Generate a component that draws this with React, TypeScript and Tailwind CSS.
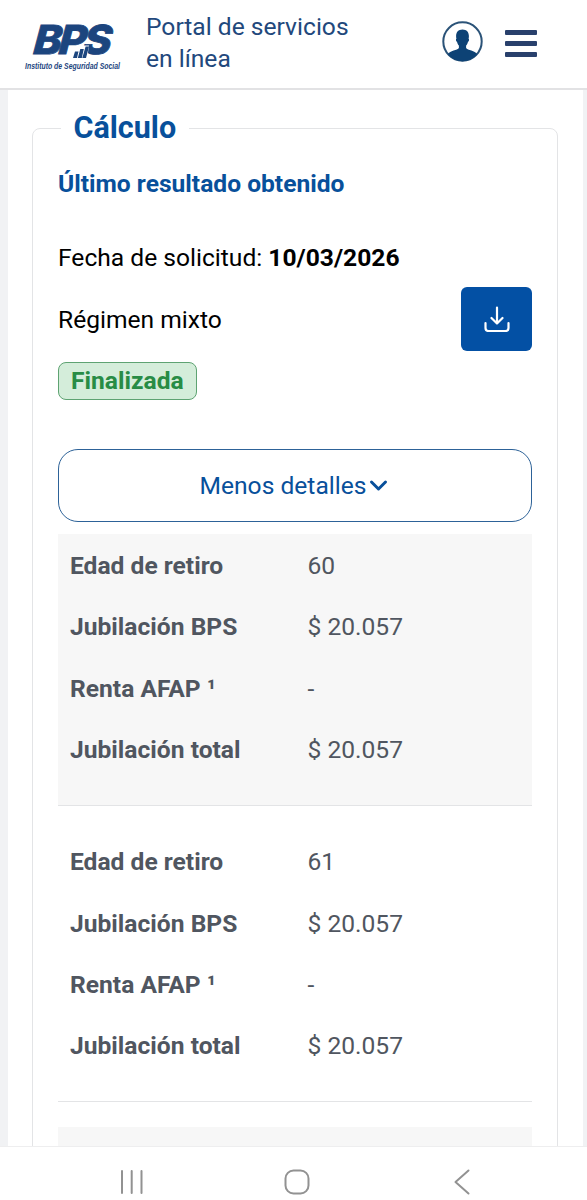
import React from "react"

const results = [
  { age: "60", bps: "$ 20.057", afap: "-", total: "$ 20.057" },
  { age: "61", bps: "$ 20.057", afap: "-", total: "$ 20.057" },
]

function BpsLogo() {
  return (
    <svg width="98" height="54" viewBox="0 0 98 54" className="shrink-0 overflow-visible" fill="#1c457e" aria-label="BPS">
      <text
        x="11.500"
        y="31.500"
        transform="skewX(-5)"
        textLength="75"
        lengthAdjust="spacingAndGlyphs"
        className="font-['Inter',sans-serif] text-[40px] font-extrabold italic tracking-[-3px]"
        stroke="#1c457e"
        strokeWidth="0.800"
      >
        BPS
      </text>
      {/* barras ascendentes bajo la P */}
      <path d="M49 26.500L58 23.500H65L63 37H47Z" fill="#fff" />
      <path d="M51 29.500h3.500l-1.500 6.500h-4zM56.300 27h3.500l-2 9h-4zM61.600 24.500h3.400l-3 11.500h-3.700z" />
      <text
        x="1"
        y="46.500"
        textLength="95"
        lengthAdjust="spacingAndGlyphs"
        className="font-['Liberation_Sans',sans-serif] text-[9.500px] font-bold italic"
      >
        Instituto de Seguridad Social
      </text>
    </svg>
  )
}

function Header() {
  return (
    <header className="flex h-[90px] shrink-0 items-start border-b-2 border-[#e2e2e4] bg-white pl-6">
      <div className="pt-[22px]">
        <BpsLogo />
      </div>
      <div className="ml-6 w-[230px] pt-[11px] text-[24.600px] leading-8 text-[#22487c]">
        Portal de servicios en línea
      </div>
      <button className="ml-[66px] mt-[21px]" aria-label="Usuario">
        <svg width="41" height="41" viewBox="0 0 41 41">
          <circle cx="20.500" cy="20.500" r="19.200" fill="#fff" stroke="#2b5378" strokeWidth="2" />
          <path
            d="M20.500 8.500c-4.200 0-6.400 2.800-6.400 6.500 0 1 .1 2 .3 2.700-.8.300-.6 2.500.6 3 .4 1.800 1.100 3 1.900 3.900v2.500c-1.300 2.500-9.100 2.300-11.100 6.400A19.300 19.300 0 0 0 35.200 33.500c-2-4.100-9.800-3.900-11.100-6.400v-2.500c.8-.9 1.500-2.100 1.900-3.900 1.200-.5 1.400-2.700.6-3 .2-.7.3-1.700.3-2.700 0-3.700-2.200-6.500-6.400-6.500z"
            fill="#0d4275"
          />
        </svg>
      </button>
      <button className="ml-[22px] mt-[30px] flex flex-col gap-[6px]" aria-label="Menú">
        <span className="h-[5px] w-8 rounded-[1px] bg-[#29406c]" />
        <span className="h-[5px] w-8 rounded-[1px] bg-[#29406c]" />
        <span className="h-[5px] w-8 rounded-[1px] bg-[#29406c]" />
      </button>
    </header>
  )
}

function Row({ label, value }: { label: React.ReactNode; value: string }) {
  return (
    <div className="flex h-[61.400px] items-center px-[12px]">
      <dt className="w-[237.500px] font-bold">{label}</dt>
      <dd>{value}</dd>
    </div>
  )
}

export default function App() {
  return (
    <div className="flex h-[1200px] w-[587px] flex-col overflow-hidden bg-white font-['Roboto',sans-serif] text-[24.600px] text-black">
      <Header />

      <main className="min-h-0 flex-1 overflow-hidden bg-[#f1f2f4] pl-2 pr-[4px]">
        <div className="bg-white pl-6 pr-[25px] pt-[18px]">
          <fieldset className="rounded-lg border border-[#e3e4e6] px-[25px]">
            <legend className="ml-[3px] px-[12.500px] text-[30.500px] font-bold leading-10 text-[#08509b]">Cálculo</legend>

            <h2 className="mt-[20px] font-bold leading-8 text-[#08509b]">Último resultado obtenido</h2>

            <p className="mt-[42px] leading-8">
              Fecha de solicitud: <strong>10/03/2026</strong>
            </p>

            <div className="mt-[13px] flex h-16 items-center justify-between">
              <span className="pt-[2px]">Régimen mixto</span>
              <button
                className="flex h-16 w-[71px] items-center justify-center rounded-md bg-[#0350a4]"
                aria-label="Descargar"
              >
                <svg
                  width="26"
                  height="26"
                  viewBox="0 0 26 26"
                  fill="none"
                  stroke="#fff"
                  strokeWidth="2.200"
                  strokeLinecap="round"
                  strokeLinejoin="round"
                >
                  <path d="M13 1.500v16M7.500 12l5.500 5.500 5.500-5.500M1.500 17v5q0 3 3 3h17q3 0 3-3v-5" />
                </svg>
              </button>
            </div>

            <div className="mt-[11px] flex">
              <span className="flex h-[38px] items-center rounded-lg border border-[#5ea372] bg-[#d4edda] px-3 font-bold text-[#288c45]">
                Finalizada
              </span>
            </div>

            <button className="mt-[49px] flex h-[73px] w-full items-center justify-center rounded-[20px] border border-[#2d6298] pr-[2px] pt-[1px] text-[#08509b]">
              Menos detalles
              <svg
                width="20"
                height="20"
                viewBox="0 0 20 20"
                className="ml-[2px]"
                fill="none"
                stroke="currentColor"
                strokeWidth="3"
                strokeLinecap="round"
                strokeLinejoin="round"
              >
                <path d="M3.500 6l7 7 7-7" />
              </svg>
            </button>

            <div className="mt-[12px] flex flex-col gap-[25px] text-[#505660]">
              {results.map((r, i) => (
                <dl
                  key={r.age}
                  className={`h-[271.500px] border-b border-[#e3e4e6] pt-[1.500px] ${i % 2 === 0 ? "bg-[#f7f7f7]" : "bg-white"}`}
                >
                  <Row label="Edad de retiro" value={r.age} />
                  <Row label="Jubilación BPS" value={r.bps} />
                  <Row label="Renta AFAP ¹" value={r.afap} />
                  <Row label="Jubilación total" value={r.total} />
                </dl>
              ))}
              <div className="h-[271px] bg-[#f7f7f7]" />
            </div>
          </fieldset>
        </div>
      </main>

      {/* barra de navegación del sistema */}
      <nav className="flex h-[54px] shrink-0 items-start gap-[137px] border-t border-[#eeeeef] bg-white pl-[118px] pt-[21px]">
        <svg width="28" height="28" viewBox="0 0 28 28" stroke="#929292" strokeWidth="2" strokeLinecap="round">
          <path d="M4 3v22M13.700 3v22M23.500 3v22" />
        </svg>
        <svg width="28" height="28" viewBox="0 0 28 28" fill="none" stroke="#929292" strokeWidth="2">
          <rect x="2.500" y="2.500" width="23" height="23" rx="8" />
        </svg>
        <svg
          width="28"
          height="28"
          viewBox="0 0 28 28"
          fill="none"
          stroke="#929292"
          strokeWidth="2"
          strokeLinecap="round"
          strokeLinejoin="round"
        >
          <path d="M20.500 2.500L7.500 14l13 11.500" />
        </svg>
      </nav>
    </div>
  )
}
